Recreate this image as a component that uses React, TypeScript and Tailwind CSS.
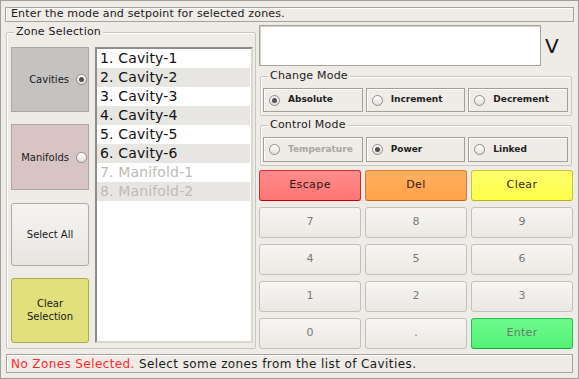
import React from 'react';

const FONT = { fontFamily: '"DejaVu Sans", "Liberation Sans", sans-serif' };

const Radio = ({ checked }: { checked?: boolean }) => (
  <span className="w-[11px] h-[11px] rounded-full border border-[#8f8c88] bg-linear-to-b from-[#ffffff] to-[#e2dfdb] flex items-center justify-center shrink-0">
    {checked && <span className="w-[5px] h-[5px] rounded-full bg-[#505050]" />}
  </span>
);

const GroupBox = ({ title, className, children }: { title: string; className?: string; children: React.ReactNode }) => (
  <div className={`relative border border-[#c9c5c0] rounded-[2px] shadow-[inset_1px_1px_0_#ffffff] ${className ?? ''}`}>
    <span className="absolute -top-[8px] left-[7px] px-[2px] bg-[#efebe7] text-[11px] leading-[14px] tracking-[0.2px] text-[#1a1a1a]">{title}</span>
    {children}
  </div>
);

const RadioBox = ({ label, checked, disabled }: { label: string; checked?: boolean; disabled?: boolean }) => (
  <div className="flex-1 h-full flex items-center gap-[8px] pl-[5px] border border-[#a29f9a] shadow-[inset_1px_1px_0_#ffffff]">
    <Radio checked={checked} />
    <span className={`text-[9px] font-bold ${disabled ? 'text-[#a8a6a2]' : 'text-[#222]'}`}>{label}</span>
  </div>
);

const zones = [
  { n: '1. Cavity-1', on: true },
  { n: '2. Cavity-2', on: true },
  { n: '3. Cavity-3', on: true },
  { n: '4. Cavity-4', on: true },
  { n: '5. Cavity-5', on: true },
  { n: '6. Cavity-6', on: true },
  { n: '7. Manifold-1', on: false },
  { n: '8. Manifold-2', on: false },
];

const keys = ['7', '8', '9', '4', '5', '6', '1', '2', '3', '0', '.'];

export default function App() {
  return (
    <div style={FONT} className="w-[579px] h-[379px] bg-[#efebe7] border border-[#a19f9b] px-[4px] pt-[6px] flex flex-col overflow-hidden">
      <div className="h-[15px] border border-[#a6a39e] shadow-[inset_1px_1px_0_#ffffff] flex items-center pl-[5px] text-[11px] tracking-[0.17px] text-[#1a1a1a]">
        Enter the mode and setpoint for selected zones.
      </div>

      <div className="mt-[3px] h-[325px] flex gap-[3px]">
        <GroupBox title="Zone Selection" className="mt-[7px] ml-[1px] w-[250px] h-[317px] flex gap-[6px] pt-[14px] pl-[4px] pr-[2px] pb-[5px]">
          <div className="w-[78px] flex flex-col justify-between">
            <div className="h-[65px] bg-[#c4c3c1] border border-[#a9a7a4] flex items-center justify-end gap-[7px] pr-[1px] text-[10px] text-[#1a1a1a]">
              <span>Cavities</span>
              <Radio checked />
            </div>
            <div className="h-[66px] bg-[#d9c4c4] border border-[#aba5a4] flex items-center justify-end gap-[7px] pr-[1px] text-[10px] text-[#1a1a1a]">
              <span>Manifolds</span>
              <Radio />
            </div>
            <div className="h-[63px] rounded-[3px] bg-linear-to-b from-[#f6f4f2] to-[#e8e5e1] border border-[#aeaba6] flex items-center justify-center text-[10px] text-[#1a1a1a]">
              Select All
            </div>
            <div className="h-[65px] rounded-[3px] bg-[#e1e07d] border border-[#acab4a] flex items-center justify-center text-center text-[10px] leading-[13px] text-[#1a1a1a]">
              Clear
              <br />
              Selection
            </div>
          </div>
          <div className="flex-1 bg-white border-2 border-[#8e8c88] border-r-[#d9d6d2] border-b-[#d9d6d2] pr-[1px]">
            {zones.map((z, i) => (
              <div
                key={z.n}
                className={`h-[19px] flex items-center pl-[3px] text-[14px] tracking-[0.15px] ${i % 2 ? 'bg-[#e8e6e2]' : 'bg-white'} ${z.on ? 'text-[#111]' : 'text-[#bdbbb8]'}`}
              >
                {z.n}
              </div>
            ))}
          </div>
        </GroupBox>

        <div className="w-[314px] flex flex-col">
          <div className="h-[41px] flex items-center">
            <div className="w-[282px] h-full bg-white border border-[#a5a29e] shadow-[inset_1px_1px_0_#d8d5d1]" />
            <span className="ml-[4px] text-[20px] text-[#111]">V</span>
          </div>

          <GroupBox title="Change Mode" className="mt-[10px] ml-[1px] mr-[1px] pt-[11px] pl-[2px] pr-[3px] pb-[3px]">
            <div className="h-[24px] flex gap-[3px]">
              <RadioBox label="Absolute" checked />
              <RadioBox label="Increment" />
              <RadioBox label="Decrement" />
            </div>
          </GroupBox>

          <GroupBox title="Control Mode" className="mt-[9px] ml-[1px] mr-[1px] pt-[11px] pl-[2px] pr-[3px] pb-[3px]">
            <div className="h-[25px] flex gap-[3px]">
              <RadioBox label="Temperature" disabled />
              <RadioBox label="Power" checked />
              <RadioBox label="Linked" />
            </div>
          </GroupBox>

          <div className="mt-[4px] grid grid-cols-3 gap-x-[4px] gap-y-[6px] grid-rows-[repeat(5,31px)]">
            <div className="rounded-[3px] border border-[#d42a2a] border-b-[#c00000] bg-linear-to-b from-[#ff8c8c] to-[#ff7474] flex items-center justify-center text-[11px] tracking-[0.4px] text-[#2a1a1a]">
              Escape
            </div>
            <div className="rounded-[3px] border border-[#d67a2c] border-b-[#c86410] bg-linear-to-b from-[#ffb060] to-[#ffa24a] flex items-center justify-center text-[11px] tracking-[0.4px] text-[#2a1a1a]">
              Del
            </div>
            <div className="rounded-[3px] border border-[#c8c43a] border-b-[#b5b020] bg-linear-to-b from-[#ffff6a] to-[#ffff48] flex items-center justify-center text-[11px] tracking-[0.4px] text-[#2a2a1a]">
              Clear
            </div>
            {keys.map((k) => (
              <div
                key={k}
                className="rounded-[3px] border border-[#c3c0bb] bg-linear-to-b from-[#f7f5f3] to-[#ebe8e4] flex items-center justify-center text-[11px] text-[#7a7a7a]"
              >
                {k}
              </div>
            ))}
            <div className="rounded-[3px] border border-[#22c04a] border-b-[#10b038] bg-linear-to-b from-[#6cfa8e] to-[#52f276] flex items-center justify-center text-[11px] tracking-[0.3px] text-[#6b7a6e]">
              Enter
            </div>
          </div>
        </div>
      </div>

      <div className="mt-[4px] ml-[1px] mr-[1px] h-[19px] border border-[#a6a39e] shadow-[inset_1px_1px_0_#ffffff] flex items-center pl-[4px] text-[12px] tracking-[0.4px] text-[#1a1a1a]">
        <span className="text-[#ff2a2a]">No Zones Selected.</span>
        <span>&nbsp;Select some zones from the list of Cavities.</span>
      </div>
    </div>
  );
}
